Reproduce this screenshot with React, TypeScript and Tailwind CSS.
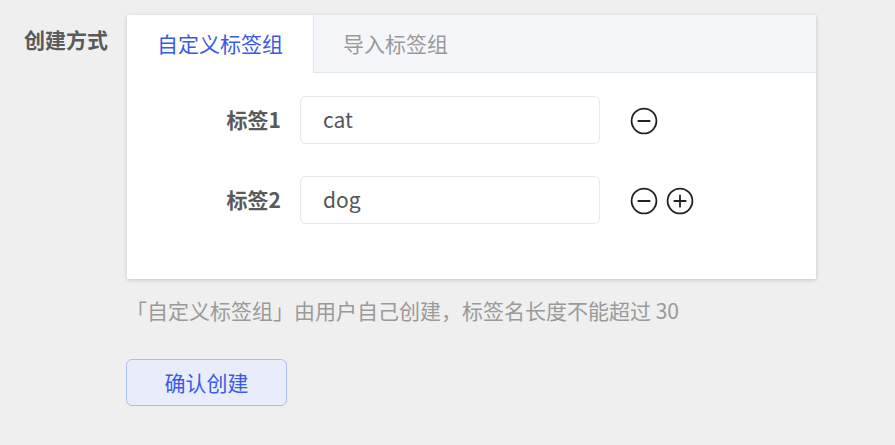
import React from "react";

const font = { fontFamily: '"Noto Sans CJK SC", "Noto Sans", sans-serif' };

function CircleIcon({ plus }: { plus?: boolean }) {
  return (
    <svg width="28" height="28" viewBox="0 0 28 28" fill="none" stroke="#222" strokeWidth="1.8" strokeLinecap="round">
      <circle cx="14" cy="14" r="12.4" />
      <line x1="8.3" y1="14" x2="19.7" y2="14" />
      {plus && <line x1="14" y1="8.3" x2="14" y2="19.7" />}
    </svg>
  );
}

function Row({ label, value, plus }: { label: string; value: string; plus?: boolean }) {
  return (
    <div className="flex items-center h-[48px]">
      <div className="w-[156px] text-right text-[21px] font-bold text-[#5a5a5a] pr-[2px]">{label}</div>
      <div className="ml-[17px] w-[300px] h-[48px] rounded-[6px] border border-[#e6e8f0] bg-white flex items-center pl-[22px] text-[21px] text-[#555]">
        {value}
      </div>
      <div className="ml-[30px] flex items-center gap-[8px] mt-[2px]">
        <CircleIcon />
        {plus && <CircleIcon plus />}
      </div>
    </div>
  );
}

export default function App() {
  return (
    <div className="w-[895px] h-[445px] bg-[#efefef] overflow-hidden" style={font}>
      <div className="flex pt-[15px] pl-[24px]">
        <div className="w-[103px] pt-[9px] text-[21px] font-bold text-[#5a5a5a] leading-[30px]">创建方式</div>
        <div className="flex flex-col">
          <div className="w-[689px] h-[264px] bg-white shadow-[0_1px_4px_rgba(0,0,0,0.18)] flex flex-col">
            <div className="flex h-[58px]">
              <div className="w-[186px] flex items-center pl-[30px] text-[21px] text-[#3a5ae8]">自定义标签组</div>
              <div className="flex-1 bg-[#f5f6fa] border-l border-b border-[#e3e6ee] flex items-center pl-[29px] text-[21px] text-[#9a9a9a]">
                导入标签组
              </div>
            </div>
            <div className="flex flex-col gap-[32px] pt-[23px]">
              <Row label="标签1" value="cat" />
              <Row label="标签2" value="dog" plus />
            </div>
          </div>
          <div className="mt-[16px] text-[21px] leading-[30px] text-[#9a9a9a] -ml-[1px]">
            「自定义标签组」由用户自己创建，标签名长度不能超过 30
          </div>
          <button className="mt-[34px] -ml-[1px] w-[161px] h-[47px] rounded-[6px] border border-[#a9bff0] bg-[#e9edfb] text-[21px] text-[#3a5ae8] flex items-center justify-center">
            确认创建
          </button>
        </div>
      </div>
    </div>
  );
}
